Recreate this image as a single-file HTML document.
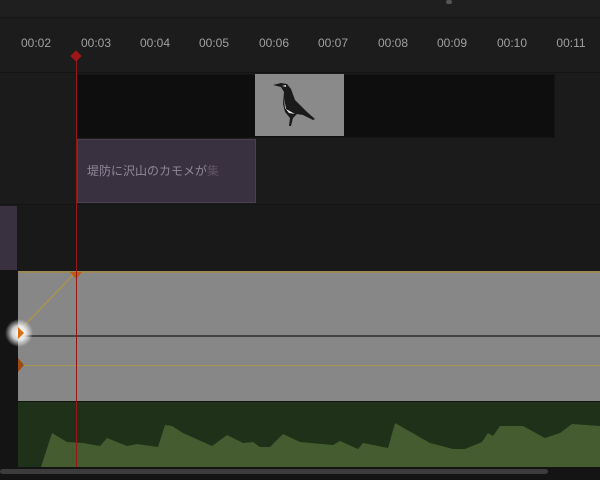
<!DOCTYPE html>
<html><head><meta charset="utf-8"><style>
body{margin:0;width:600px;height:480px;overflow:hidden;background:#1a1a1a;position:relative;font-family:"Liberation Sans","Noto Sans CJK JP",sans-serif}
div{position:absolute}
.t{top:36px;font-size:12px;color:#a0a0a0;width:44px;text-align:center}
</style></head><body>
<div style="left:0;top:0;width:600px;height:17px;background:#1f1f1f;border-bottom:1px solid #161616"></div>
<div style="left:446px;top:0;width:6px;height:4px;background:#555;border-radius:3px"></div>
<div style="left:0;top:18px;width:600px;height:54px;background:#1c1c1c;border-bottom:1px solid #141414"></div>
<div class="t" style="left:14px">00:02</div>
<div class="t" style="left:74px">00:03</div>
<div class="t" style="left:133px">00:04</div>
<div class="t" style="left:192px">00:05</div>
<div class="t" style="left:252px">00:06</div>
<div class="t" style="left:311px">00:07</div>
<div class="t" style="left:371px">00:08</div>
<div class="t" style="left:430px">00:09</div>
<div class="t" style="left:490px">00:10</div>
<div class="t" style="left:549px">00:11</div>
<div style="left:0;top:73px;width:600px;height:131px;background:#1b1b1b"></div>
<div style="left:77px;top:74px;width:476px;height:62px;background:#0e0e0e;border:1px solid #151515"></div>
<div style="left:255px;top:74px;width:89px;height:62px;background:#8a8a8a">
<svg width="89" height="62" viewBox="0 0 89 62"><path d="M18 11 L26 9 L32 10 L36 15 L40 26 L52 38 L60 45 L58 46 L48 41 L42 40 L38 44 L36 52 L34 52 L35 44 L30 38 L28 30 L29 18 L26 13 Z" fill="#1a1a1a"/><path d="M29 24 L31 35 L40 40 L34 39 L30 34 Z" fill="#e6e6e6"/><path d="M27 12 L31 11 L31 13 Z" fill="#ddd"/></svg></div>
<div style="left:77px;top:139px;width:179px;height:64px;background:#393040;border:1px solid #4a4050;box-sizing:border-box"></div>
<div style="left:87px;top:162px;font-size:12px;color:#8f8898;white-space:nowrap">堤防に沢山のカモメが<span style="color:#5d5464">集</span></div>
<div style="left:0;top:204px;width:600px;height:66px;background:#191919;border-top:1px solid #151515"></div>
<div style="left:0;top:206px;width:17px;height:64px;background:#3a3140"></div>
<div style="left:0;top:270px;width:18px;height:200px;background:#141414"></div>
<div style="left:18px;top:271px;width:582px;height:130px;background:#878787;border-top:2px solid #9b8a55;box-sizing:border-box"></div>
<div style="left:18px;top:335px;width:582px;height:2px;background:#444"></div>
<div style="left:18px;top:365px;width:582px;height:1px;background:#a89550"></div>
<svg style="position:absolute;left:0;top:260px" width="600" height="120"><defs><radialGradient id="g"><stop offset="0" stop-color="#fff"/><stop offset="0.5" stop-color="#fff" stop-opacity="0.8"/><stop offset="1" stop-color="#fff" stop-opacity="0"/></radialGradient></defs><line x1="19" y1="71" x2="76" y2="12" stroke="#a89550" stroke-width="1.5"/><path d="M70 12 L82 12 L76 19 Z" fill="#c25a10"/><path d="M18 98 L24 105 L18 112 Z" fill="#9b4a10"/><circle cx="19" cy="73" r="14" fill="url(#g)"/><path d="M18 67 L24 73 L18 79 Z" fill="#d6700f"/></svg>
<div style="left:18px;top:401px;width:582px;height:66px;background:#1f3118;border-top:1px solid #0f160c"></div>
<svg style="position:absolute;left:0;top:0" width="600" height="480"><path d="M41 467 L52 433 L67 442 L83 443 L100 446 L107 438 L127 446 L137 444 L158 447 L165 425 L172 426 L183 433 L212 446 L227 435 L243 443 L253 442 L260 447 L270 447 L283 434 L300 442 L333 445 L340 441 L358 449 L363 443 L388 448 L395 423 L430 443 L453 449 L465 449 L482 442 L488 433 L493 436 L500 426 L523 426 L545 438 L560 433 L572 424 L600 426 L600 467 Z" fill="#445c2f"/></svg>
<div style="left:76px;top:55px;width:1px;height:412px;background:#9a1515"></div>
<div style="left:72px;top:52px;width:8px;height:8px;background:#a01515;transform:rotate(45deg)"></div>
<div style="left:0;top:467px;width:600px;height:13px;background:#141414"></div>
<div style="left:0;top:469px;width:548px;height:5px;background:#3c3c3c;border-radius:3px"></div>
</body></html>
